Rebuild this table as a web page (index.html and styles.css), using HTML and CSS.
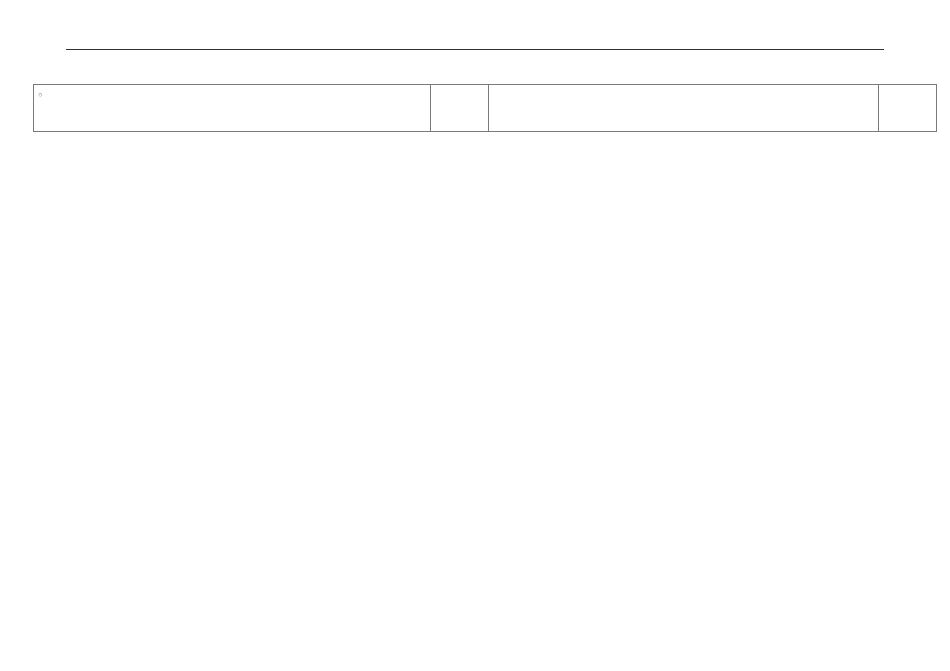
FILE: index.html
```html
<!DOCTYPE html>
<html lang="en">
  <head>
    <meta charset="UTF-8" />
    <link rel="stylesheet" href="styles.css">
  </head>
  <body>
    <div class="page">
      <hr class="rule" />
      <table class="grid">
        <tr>
          <td class="wide"><span class="mark">&#9702;</span></td>
          <td class="narrow"></td>
          <td class="wide2"></td>
          <td class="narrow"></td>
        </tr>
      </table>
    </div>
  </body>
</html>
```

FILE: styles.css
```css
body {
  margin: 0;
  background: #fff;
  font-family: "DejaVu Sans", sans-serif;
}
.page {
  padding: 49px 13px 0 33px;
}
.page .rule {
  margin: 0 53px 0 33px;
  border: none;
  border-top: 1px solid #333;
  height: 0;
}
.page .grid {
  margin-top: 34px;
  border-collapse: collapse;
  width: 904px;
}
.page .grid td {
  border: 1px solid #7a7a7a;
  height: 46px;
  padding: 0;
  vertical-align: top;
}
.page .grid td.wide {
  width: 396px;
}
.page .grid td.narrow {
  width: 57px;
}
.page .grid td.wide2 {
  width: 389px;
}
.page .grid .mark {
  display: block;
  font-size: 11px;
  line-height: 11px;
  color: #555;
  padding: 5px 0 0 3px;
}
```
